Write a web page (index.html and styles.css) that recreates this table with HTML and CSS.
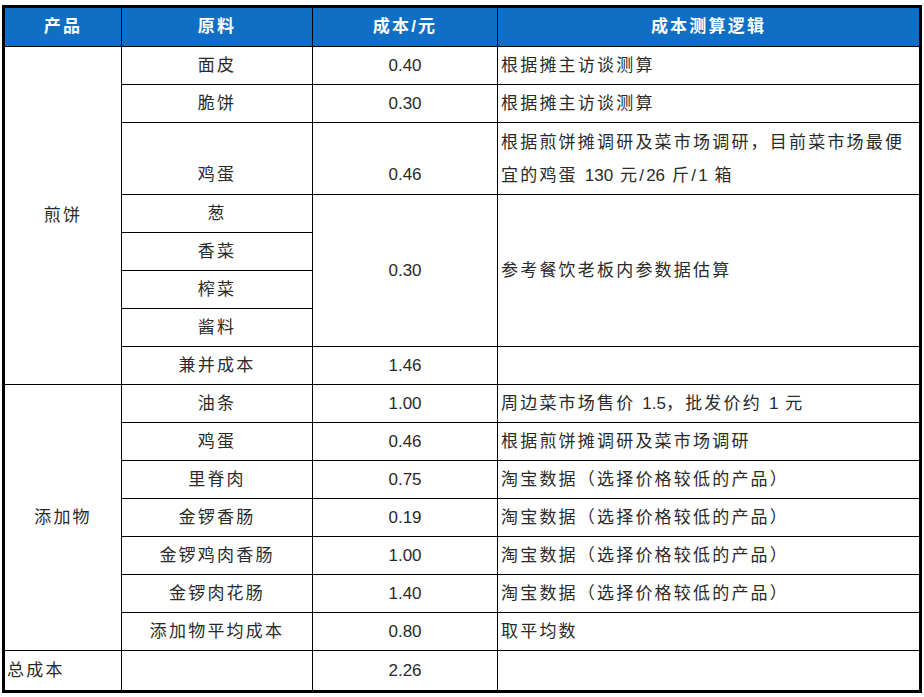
FILE: index.html
```html
<!DOCTYPE html>
<html lang="zh-CN">
<head>
<meta charset="utf-8">
<title>煎饼成本测算</title>
<link rel="stylesheet" href="styles.css">
</head>
<body>
<table class="cost">
  <colgroup>
    <col class="c1"><col class="c2"><col class="c3"><col class="c4">
  </colgroup>
  <thead>
    <tr class="head">
      <th>产品</th><th>原料</th><th>成本/元</th><th>成本测算逻辑</th>
    </tr>
  </thead>
  <tbody>
    <tr>
      <td class="prod" rowspan="8">煎饼</td>
      <td class="mat">面皮</td><td class="num">0.40</td><td class="logic">根据摊主访谈测算</td>
    </tr>
    <tr>
      <td class="mat">脆饼</td><td class="num">0.30</td><td class="logic">根据摊主访谈测算</td>
    </tr>
    <tr class="tall">
      <td class="mat bottom">鸡蛋</td><td class="num bottom">0.46</td>
      <td class="logic multi"><div class="ln">根据煎饼摊调研及菜市场调研，目前菜市场最便</div><div class="ln">宜的鸡蛋 <span class="n">130</span> 元/<span class="n">26</span> 斤/<span class="n">1</span> 箱</div></td>
    </tr>
    <tr>
      <td class="mat">葱</td><td class="num" rowspan="4">0.30</td><td class="logic" rowspan="4">参考餐饮老板内参数据估算</td>
    </tr>
    <tr><td class="mat">香菜</td></tr>
    <tr><td class="mat">榨菜</td></tr>
    <tr><td class="mat">酱料</td></tr>
    <tr>
      <td class="mat">兼并成本</td><td class="num">1.46</td><td class="logic"></td>
    </tr>
    <tr>
      <td class="prod" rowspan="7">添加物</td>
      <td class="mat">油条</td><td class="num">1.00</td><td class="logic">周边菜市场售价 <span class="n">1.5</span>，批发价约 <span class="n">1</span> 元</td>
    </tr>
    <tr>
      <td class="mat">鸡蛋</td><td class="num">0.46</td><td class="logic">根据煎饼摊调研及菜市场调研</td>
    </tr>
    <tr>
      <td class="mat">里脊肉</td><td class="num">0.75</td><td class="logic">淘宝数据（选择价格较低的产品）</td>
    </tr>
    <tr>
      <td class="mat">金锣香肠</td><td class="num">0.19</td><td class="logic">淘宝数据（选择价格较低的产品）</td>
    </tr>
    <tr>
      <td class="mat">金锣鸡肉香肠</td><td class="num">1.00</td><td class="logic">淘宝数据（选择价格较低的产品）</td>
    </tr>
    <tr>
      <td class="mat">金锣肉花肠</td><td class="num">1.40</td><td class="logic">淘宝数据（选择价格较低的产品）</td>
    </tr>
    <tr>
      <td class="mat">添加物平均成本</td><td class="num">0.80</td><td class="logic">取平均数</td>
    </tr>
    <tr class="total">
      <td class="prod left">总成本</td><td class="mat"></td><td class="num">2.26</td><td class="logic"></td>
    </tr>
  </tbody>
</table>
</body>
</html>
```

FILE: styles.css
```css
html, body {
  background: #ffffff;
}
body {
  margin: 5px 0 0 2px;
  font-family: "Liberation Sans", "Noto Sans CJK SC", sans-serif;
  font-size: 17px;
  color: #2a2a2a;
}
.cost {
  border-collapse: collapse;
  table-layout: fixed;
  width: 917px;
  border: 3px solid #000;
}
.c1 { width: 118px; }
.c2 { width: 191px; }
.c3 { width: 185px; }
.c4 { width: 423px; }

.cost th,
.cost td {
  border: 1px solid #000;
  padding: 0;
  height: 37px;
  line-height: 24px;
  vertical-align: middle;
  letter-spacing: 2.2px;
}
.head th {
  background: #0f6fc4;
  color: #ffffff;
  font-weight: bold;
  text-align: center;
  height: 38px;
}
.prod { text-align: center; }
.prod.left { text-align: left; padding-left: 2px; }
.mat { text-align: center; }
.num { text-align: center; letter-spacing: 0 !important; }
.logic { text-align: left; padding-left: 3px !important; }
.n { letter-spacing: 0; }
.tall td { height: 71px; }
.tall td.bottom {
  height: 64px;
  vertical-align: bottom;
  padding-bottom: 7px;
}
.ln {
  height: 33px;
  line-height: 33px;
  overflow: hidden;
  white-space: nowrap;
}
.total td { height: 39px; }
```
